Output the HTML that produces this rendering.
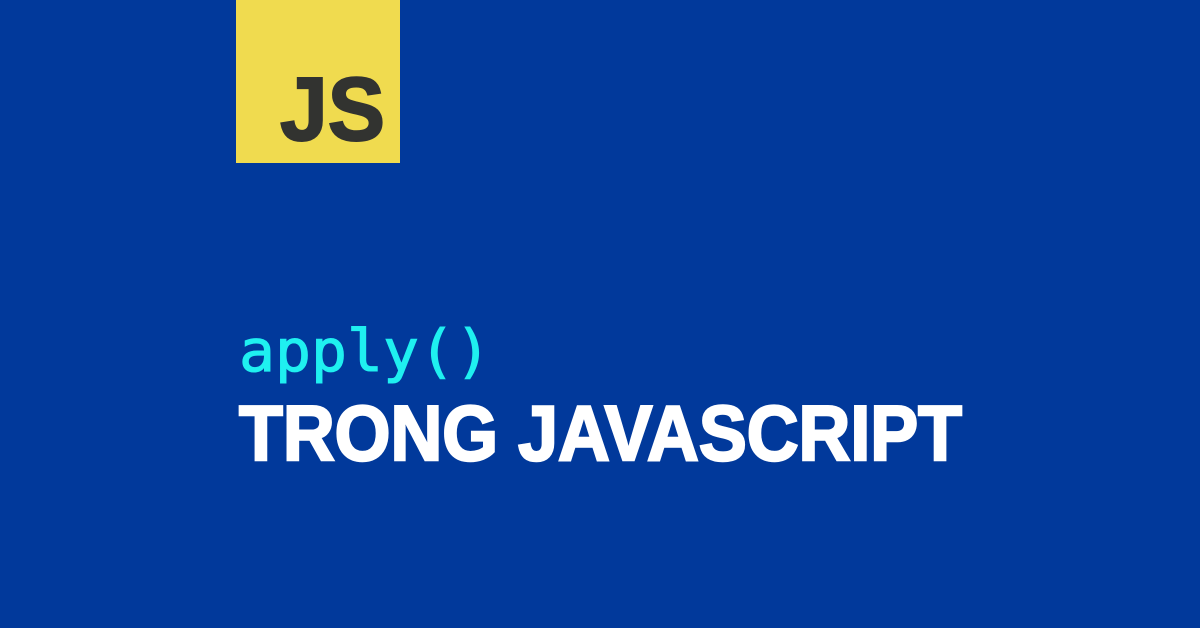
<!DOCTYPE html>
<html><head><meta charset="utf-8"><style>
html,body{margin:0;padding:0;width:1200px;height:628px;overflow:hidden;background:#01399b}
</style></head><body>
<svg width="1200" height="628" xmlns="http://www.w3.org/2000/svg">
<rect width="1200" height="628" fill="#01399b"/>
<rect x="236" y="0" width="164" height="163" fill="#f0db4f"/>
<text x="280" y="140" font-family="Liberation Sans, sans-serif" font-weight="bold" font-size="90" fill="#323330" stroke="#323330" stroke-width="2" textLength="105" lengthAdjust="spacingAndGlyphs">JS</text>
<text x="239" y="371" font-family="DejaVu Sans Mono, monospace" font-size="58" fill="#1ff0f0" stroke="#1ff0f0" stroke-width="1" textLength="252" lengthAdjust="spacingAndGlyphs">apply()</text>
<text x="239" y="460" font-family="Liberation Sans, sans-serif" font-weight="bold" font-size="78" fill="#ffffff" stroke="#ffffff" stroke-width="2.5" textLength="723" lengthAdjust="spacingAndGlyphs">TRONG JAVASCRIPT</text>
</svg>
</body></html>
